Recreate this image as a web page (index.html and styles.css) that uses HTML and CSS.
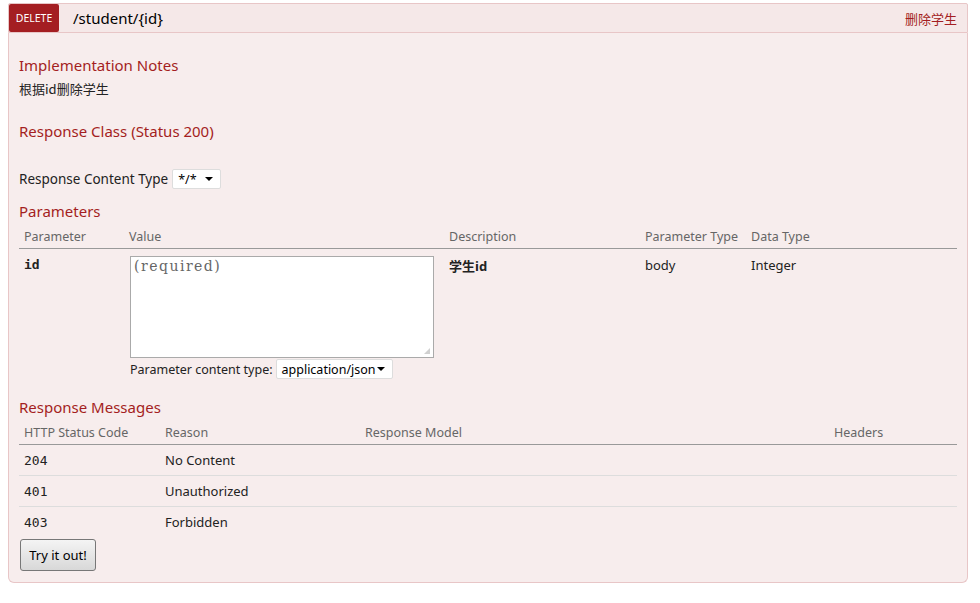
FILE: index.html
```html
<!DOCTYPE html>
<html>
<head>
<meta charset="utf-8">
<link rel="stylesheet" href="styles.css">
</head>
<body>
<div class="op">
  <div class="heading">
    <span class="method">DELETE</span>
    <span class="path">/student/{id}</span>
    <span class="summary">删除学生</span>
  </div>
  <div class="content">
    <h4 class="first">Implementation Notes</h4>
    <div class="notes">根据id删除学生</div>
    <h4 class="rc-h">Response Class (Status 200)</h4>
    <div class="ctype">
      <span>Response Content Type</span>
      <span class="select small">*/*<i class="caret"></i></span>
    </div>
    <h4 class="params-h">Parameters</h4>
    <table class="ptable">
      <thead>
        <tr><th class="c1">Parameter</th><th class="c2">Value</th><th class="c3">Description</th><th class="c4">Parameter Type</th><th class="c5">Data Type</th></tr>
      </thead>
      <tbody>
        <tr>
          <td class="code">id</td>
          <td>
            <div class="textarea"><span class="ph">(required)</span><span class="grip"></span></div>
            <div class="pct"><span>Parameter content type:</span><span class="select wide">application/json<i class="caret"></i></span></div>
          </td>
          <td class="strong">学生id</td>
          <td>body</td>
          <td>Integer</td>
        </tr>
      </tbody>
    </table>
    <h4 class="rm-h">Response Messages</h4>
    <table class="rtable">
      <thead>
        <tr><th class="r1">HTTP Status Code</th><th class="r2">Reason</th><th class="r3">Response Model</th><th class="r4">Headers</th></tr>
      </thead>
      <tbody>
        <tr><td class="code">204</td><td>No Content</td><td></td><td></td></tr>
        <tr><td class="code">401</td><td>Unauthorized</td><td></td><td></td></tr>
        <tr><td class="code">403</td><td>Forbidden</td><td></td><td></td></tr>
      </tbody>
    </table>
    <button class="try">Try it out!</button>
  </div>
</div>
</body>
</html>
```
FILE: styles.css
```css
html, body { margin: 0; padding: 0; background: #fff; }
body {
  font-family: "Noto Sans", "Noto Sans CJK SC", sans-serif;
  font-size: 13px;
  color: #222;
}
.op {
  margin: 3px 0 0 8px;
  width: 960px;
}
.heading {
  display: flex;
  align-items: center;
  height: 28px;
  background: #f5e8e8;
  border: 1px solid #e8c6c7;
  border-radius: 2px 2px 0 0;
}
.method {
  background: #a41e22;
  color: #fff;
  font-size: 10.5px;
  width: 50px;
  height: 28px;
  line-height: 29px;
  text-align: center;
  border-radius: 2px;
  flex: none;
}
.path {
  font-size: 15px;
  color: #000;
  margin-left: 14px;
  flex: 1;
}
.summary {
  color: #a41e22;
  font-size: 13px;
  font-family: "Noto Sans CJK SC", sans-serif;
  margin-right: 10px;
}
.content {
  background: #f7eded;
  border: 1px solid #e8c6c7;
  border-top: none;
  border-radius: 0 0 6px 6px;
  padding: 10px 10px 11px;
}
h4 {
  margin: 0;
  font-weight: normal;
  color: #a41e22;
  font-size: 15px;
  line-height: 20px;
  padding: 15px 0 5px;
}
h4.first { padding-top: 12px; padding-bottom: 5px; }
h4.rc-h { padding-top: 23px; }
.notes {
  font-family: "Noto Sans CJK SC", sans-serif;
  font-size: 13px;
  line-height: 18px;
}
.ctype {
  margin-top: 23px;
  display: flex;
  align-items: center;
  gap: 4px;
  font-size: 13.5px;
}
.select {
  display: inline-flex;
  align-items: center;
  justify-content: space-between;
  background: #fff;
  border: 1px solid #ddd;
  border-radius: 2px;
  height: 18px;
  font-size: 12.5px;
  color: #000;
  padding: 0 7px 0 5px;
  box-sizing: content-box;
}
.select.small { width: 35px; }
.select.wide { width: 103px; }
.caret {
  width: 0; height: 0;
  border-left: 4px solid transparent;
  border-right: 4px solid transparent;
  border-top: 4px solid #000;
}
h4.params-h { padding-top: 12px; padding-bottom: 3px; }
table {
  width: 100%;
  border-collapse: collapse;
}
th {
  text-align: left;
  font-weight: normal;
  color: #666;
  font-size: 12.5px;
  padding: 4px 5px 3px;
  border-bottom: 1px solid #999;
}
.ptable td {
  vertical-align: top;
  padding: 7px 5px 0;
  font-size: 13px;
}
.c1 { width: 95px; }
.c2 { width: 310px; }
.c3 { width: 186px; }
.c4 { width: 96px; }
.code {
  font-family: "DejaVu Sans Mono", monospace;
  font-size: 11.5px;
}
.ptable td.code { font-weight: bold; padding-top: 8px; }
.strong { font-weight: bold; }
.textarea {
  width: 302px;
  height: 100px;
  background: #fff;
  border: 1px solid #aaa;
  margin-left: 1px;
  position: relative;
}
.ph {
  font-family: "DejaVu Serif", serif;
  color: #666;
  font-size: 14px;
  letter-spacing: 1.5px;
  position: absolute;
  left: 3px;
  top: 1px;
}
.grip {
  position: absolute;
  right: 3px; bottom: 3px;
  width: 6px; height: 6px;
  background: radial-gradient(circle, #999 0.6px, transparent 0.8px) 0 0 / 2px 2px;
  clip-path: polygon(100% 0, 100% 100%, 0 100%);
}
.pct {
  display: flex;
  align-items: center;
  gap: 3px;
  margin-top: 1px;
  margin-left: 1px;
  font-size: 12.5px;
}
h4.rm-h { padding-top: 18px; padding-bottom: 3px; }
.r1 { width: 131px; }
.r2 { width: 190px; }
.r3 { width: 459px; }
.rtable td {
  padding: 0 5px;
  height: 30px;
  font-size: 13px;
  border-bottom: 1px solid #ddd;
}
.rtable tbody tr:last-child td { border-bottom: none; }
.try {
  margin-top: 2px;
  margin-left: 1px;
  width: 76px;
  height: 32px;
  font-family: "Noto Sans", sans-serif;
  font-size: 13px;
  color: #000;
  border: 1px solid #777;
  border-radius: 3px;
  background: linear-gradient(#f4f4f4, #d8d8d8);
}
```
